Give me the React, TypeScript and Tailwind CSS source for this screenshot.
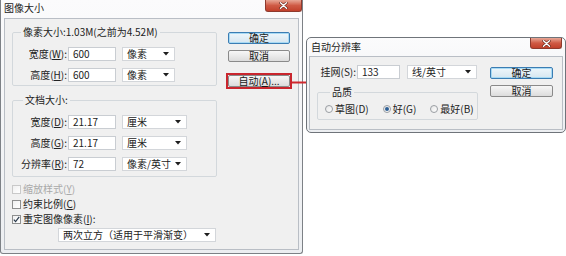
import React from "react";

const Tri = () => (
  <svg width="6" height="4" viewBox="0 0 6 4" className="shrink-0">
    <path d="M0 0h6L3 3.6z" fill="#1e1e1e" />
  </svg>
);

const U = ({ children }: { children: React.ReactNode }) => <span className="underline">{children}</span>;

function Field({ value, w }: { value: string; w: string }) {
  return (
    <div className={`flex h-[14px] items-center border border-[#c9cdd2] bg-white pl-[4px] text-[10px] leading-[12px] text-[#222] ${w}`}>
      {value}
    </div>
  );
}

function Select({ value, w }: { value: string; w: string }) {
  return (
    <div className={`flex h-[14px] items-center justify-between border border-[#d3d6da] bg-white pl-[4px] pr-[5px] text-[10px] leading-[12px] text-[#222] ${w}`}>
      <span>{value}</span>
      <Tri />
    </div>
  );
}

function Btn({ label, focused, w }: { label: React.ReactNode; focused?: boolean; w: string }) {
  return (
    <div
      className={`flex h-[12px] items-center justify-center rounded-[2px] border text-[10px] leading-[10px] text-[#1a1a1a] ${w} ${
        focused
          ? "border-[#3b7db3] bg-gradient-to-b from-[#eef6fb] to-[#d6e6f0] shadow-[inset_0_0_0_1px_#a8daf4]"
          : "border-[#8a8a8a] bg-gradient-to-b from-[#f7f7f7] to-[#dcdcdc]"
      }`}
    >
      {label}
    </div>
  );
}

function Close({ w, h }: { w: string; h: string }) {
  return (
    <div className={`flex items-center justify-center rounded-b-[3px] border border-t-0 border-[#8e3a2e] bg-gradient-to-b from-[#e7a797] via-[#cf5a45] to-[#c1402b] ${w} ${h}`}>
      <svg width="9" height="7" viewBox="0 0 9 7">
        <path d="M1.5 0.8l6 5.4M7.5 0.8l-6 5.4" stroke="#5a1d14" strokeWidth="2.6" strokeLinecap="round" />
        <path d="M1.5 0.8l6 5.4M7.5 0.8l-6 5.4" stroke="#fff" strokeWidth="1.5" strokeLinecap="round" />
      </svg>
    </div>
  );
}

function Check({ label, checked, disabled }: { label: React.ReactNode; checked?: boolean; disabled?: boolean }) {
  return (
    <div className="flex h-[14px] items-center">
      <div
        className={`flex h-[9px] w-[9px] items-center justify-center border bg-gradient-to-br from-[#f0f0f0] to-white ${
          disabled ? "border-[#c9c9c9]" : "border-[#8e8f8f]"
        }`}
      >
        {checked && (
          <svg width="7" height="7" viewBox="0 0 7 7">
            <path d="M0.8 3.6l1.8 2L6.2 0.8" stroke="#2a3a4c" strokeWidth="1.2" fill="none" />
          </svg>
        )}
      </div>
      <span className={`ml-[2px] text-[10px] leading-[12px] ${disabled ? "text-[#a9a9a9]" : "text-[#222]"}`}>{label}</span>
    </div>
  );
}

function Radio({ label, checked }: { label: string; checked?: boolean }) {
  return (
    <div className="flex items-center">
      <div className="flex h-[8px] w-[8px] items-center justify-center rounded-full border border-[#9a9ea3] bg-gradient-to-br from-[#e6e6e6] to-white">
        {checked && <div className="h-[4px] w-[4px] rounded-full bg-[#2d5f95]" />}
      </div>
      <span className="ml-[2px] text-[10px] leading-[12px] text-[#222]">{label}</span>
    </div>
  );
}

export default function App() {
  return (
    <div className="relative h-[256px] w-[566px] overflow-hidden bg-white font-['Noto_Sans_CJK_SC','Noto_Sans',sans-serif]">
      {/* 图像大小 */}
      <div className="absolute left-0 top-0 flex h-[254px] w-[303px] flex-col rounded-b-[3px] border border-t-0 border-[#7d8186] bg-gradient-to-b from-[#fbfbfc] to-[#eceef1]">
        <div className="relative h-[18px] shrink-0">
          <span className="absolute left-[3px] top-[2px] text-[10px] leading-[12px] text-[#1a1a1a]">图像大小</span>
          <div className="absolute right-0 top-0">
            <Close w="w-[37px]" h="h-[12px]" />
          </div>
        </div>
        <div className="mx-[3px] flex h-[232px] border border-[#b9bec5] bg-[#f0f0f0] pl-[7px] pt-[7px]">
          <div className="flex w-[205px] flex-col">
            <fieldset className="rounded-[2px] border border-[#d3d8dc] pb-[3px] pt-[9px]">
              <legend className="ml-[8px] px-[2px] text-[10px] leading-[12px] text-[#222]">像素大小:1.03M(之前为4.52M)</legend>
              <div className="flex flex-col gap-[7px]">
                <div className="flex items-center">
                  <span className="w-[54px] text-right text-[10px] leading-[12px] text-[#222]">宽度(<U>W</U>):</span>
                  <div className="ml-[1px]"><Field value="600" w="w-[48px]" /></div>
                  <div className="ml-[6px]"><Select value="像素" w="w-[53px]" /></div>
                </div>
                <div className="flex items-center">
                  <span className="w-[54px] text-right text-[10px] leading-[12px] text-[#222]">高度(<U>H</U>):</span>
                  <div className="ml-[1px]"><Field value="600" w="w-[48px]" /></div>
                  <div className="ml-[6px]"><Select value="像素" w="w-[53px]" /></div>
                </div>
              </div>
            </fieldset>
            <fieldset className="mt-[8px] rounded-[2px] border border-[#d3d8dc] pb-[5px] pt-[9px]">
              <legend className="ml-[10px] px-[2px] text-[10px] leading-[12px] text-[#222]">文档大小:</legend>
              <div className="flex flex-col gap-[7px]">
                <div className="flex items-center">
                  <span className="w-[54px] text-right text-[10px] leading-[12px] text-[#222]">宽度(<U>D</U>):</span>
                  <div className="ml-[1px]"><Field value="21.17" w="w-[48px]" /></div>
                  <div className="ml-[6px]"><Select value="厘米" w="w-[65px]" /></div>
                </div>
                <div className="flex items-center">
                  <span className="w-[54px] text-right text-[10px] leading-[12px] text-[#222]">高度(<U>G</U>):</span>
                  <div className="ml-[1px]"><Field value="21.17" w="w-[48px]" /></div>
                  <div className="ml-[6px]"><Select value="厘米" w="w-[65px]" /></div>
                </div>
                <div className="flex items-center">
                  <span className="w-[54px] text-right text-[10px] leading-[12px] text-[#222]">分辨率(<U>R</U>):</span>
                  <div className="ml-[1px]"><Field value="72" w="w-[48px]" /></div>
                  <div className="ml-[6px]"><Select value="像素/英寸" w="w-[65px]" /></div>
                </div>
              </div>
            </fieldset>
            <div className="mt-[5px] flex flex-col gap-[1px]">
              <Check label={<>缩放样式(<U>Y</U>)</>} disabled />
              <Check label={<>约束比例(<U>C</U>)</>} />
              <Check label={<>重定图像像素(<U>I</U>):</>} checked />
            </div>
            <div className="ml-[46px] mt-[2px]">
              <Select value="两次立方（适用于平滑渐变）" w="w-[158px]" />
            </div>
          </div>
          <div className="ml-[11px] flex w-[62px] flex-col">
            <div className="mt-[6px]"><Btn label="确定" focused w="w-[62px]" /></div>
            <div className="mt-[6px]"><Btn label="取消" w="w-[62px]" /></div>
            <div className="mt-[13px] outline-2 outline-[#c9262e]">
              <Btn label={<>自动(<U>A</U>)...</>} w="w-[62px]" />
            </div>
          </div>
        </div>
      </div>

      {/* arrow */}
      <svg className="absolute left-[292px] top-[76px]" width="40" height="13" viewBox="0 0 40 13">
        <path d="M0 6.5h28" stroke="#d0282e" strokeWidth="2" />
        <path d="M26 1l12 5.5L26 12z" fill="#d0282e" />
      </svg>

      {/* 自动分辨率 */}
      <div className="absolute left-[306px] top-[37px] flex h-[96px] w-[260px] flex-col rounded-[5px] border border-[#6f747a] bg-gradient-to-b from-[#fbfbfc] to-[#eceef1]">
        <div className="relative h-[18px] shrink-0">
          <span className="absolute left-[4px] top-[3px] text-[10px] leading-[12px] text-[#1a1a1a]">自动分辨率</span>
          <div className="absolute right-[3px] top-0">
            <Close w="w-[32px]" h="h-[11px]" />
          </div>
        </div>
        <div className="mx-[2px] flex h-[74px] border border-[#b9bec5] bg-[#f0f0f0] pl-[7px] pt-[8px]">
          <div className="flex w-[161px] flex-col">
            <div className="flex h-[14px] items-center">
              <span className="w-[39px] text-right text-[10px] leading-[12px] text-[#222]">挂网(S):</span>
              <div className="ml-[1px]"><Field value="133" w="w-[43px]" /></div>
              <div className="ml-[7px]"><Select value="线/英寸" w="w-[70px]" /></div>
            </div>
            <fieldset className="mt-[7px] rounded-[2px] border border-[#d3d8dc] pb-[4px] pl-[7px] pt-[5px]">
              <legend className="ml-[5px] px-[2px] text-[10px] leading-[12px] text-[#222]">品质</legend>
              <div className="flex h-[12px] items-center gap-[14px]">
                <Radio label="草图(D)" />
                <Radio label="好(G)" checked />
                <Radio label="最好(B)" />
              </div>
            </fieldset>
          </div>
          <div className="ml-[12px] flex flex-col">
            <div className="mt-[2px]"><Btn label="确定" focused w="w-[63px]" /></div>
            <div className="mt-[6px]"><Btn label="取消" w="w-[63px]" /></div>
          </div>
        </div>
      </div>
    </div>
  );
}
